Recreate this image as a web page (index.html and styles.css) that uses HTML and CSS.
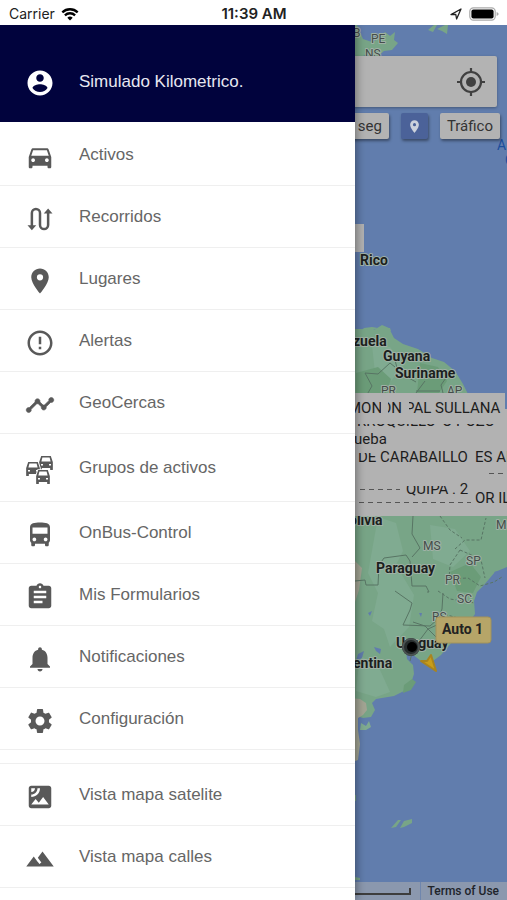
FILE: index.html
```html
<!DOCTYPE html>
<html lang="es">
<head>
  <meta charset="UTF-8">
  <meta name="viewport" content="width=device-width, initial-scale=1.0">
  <title>Mapa</title>
  <link rel="stylesheet" href="styles.css">
</head>
<body>

  <!-- Status bar -->
  <header class="status-bar">
    <div class="status-left">
      <span>Carrier</span>
      <svg class="wifi" viewBox="0 0 18 14">
        <path d="M9 13.6 6.3 10.7a4 4 0 0 1 5.4 0z"/>
        <path d="M3.9 8.3a7.4 7.4 0 0 1 10.2 0M1.3 5.3a11.2 11.2 0 0 1 15.4 0" fill="none" stroke="#000" stroke-width="2.3"/>
      </svg>
    </div>
    <span class="clock">11:39 AM</span>
    <div class="status-right">
      <svg class="arrow" viewBox="0 0 12 12"><path d="M1 6.6 11 1 6.6 11 5.8 6.5z" fill="none" stroke="#222" stroke-width="1.3" stroke-linejoin="round"/></svg>
      <svg class="battery" viewBox="0 0 30 14">
        <rect x=".8" y=".8" width="25.4" height="12.4" rx="3.6" fill="#fff" stroke="#aaa" stroke-width="1.2"/>
        <rect x="2.4" y="2.4" width="22.2" height="9.2" rx="2"/>
        <path d="M27.6 5v4c1.4-.6 2-1.2 2-2s-.6-1.4-2-2z" fill="#aaa"/>
      </svg>
    </div>
  </header>

  <main class="app">

    <!-- Map -->
    <section class="map">
      <svg class="map-canvas" viewBox="0 0 507 875" preserveAspectRatio="xMaxYMin slice">
        <!-- North: Canada and Greenland -->
        <g class="land">
          <path d="M340 0h17l6 14 9 3 8-4 5-6 5 4 5-4-1 8 4 3-6 7-8 1-7 6-12-2-10 6-15-4z"/>
          <path d="M428 5l6-5h3l-4 7zM437 4l8-4h3l-1 9-5-3z"/>
          <path d="M364 303l8-1 6 1-7 3-9-1zM385 303l5 0 1 3-6-1z"/>
        </g>

        <!-- South America -->
        <path class="land" d="M340 304l20 0 14 1 8-5 7 3 5 10 9 6 15 5 14 9 12 4 11 9 8 13 6 12 16 10 22 16v145l-12 5-11 13-7 7-3 9 1 13-10 14-12 13-12 14-8 6-12 0-9-7-6-4 1 9 6 6 1 9-3 9-5 7-12 6-18 3-4 4 3 7-4 7-8 1-9-3-2 6v17l-4 13-16 7z"/>
        <path class="land-light" d="M378 492l18 6 7 28-7 14 18 30-5 32-19 20-6-18-12-8 6-28-10-20zM360 630l20 15 10 22-14 5-20-6zM430 500l25 4 15 22-17 16-20-8zM372 320l18 2 14 18-13 16-16-8z"/>
        <path class="land-dark" d="M356 348l22-6 13 12-5 14h-30zM420 338l18 4 9 14-8 12h-22zM450 547l20-9 11 14-8 16-16-2zM404 660l8-6 4 3-5 8-8 3z"/>
        <path class="desert" d="M340 540l15-4 7 7-3 22-6 18-13 8zM340 672l20 2 6 4 1 7-4 5-5 3 0 12 2 14-2 16-14 5z"/>
        <path class="water" d="M358 629l6-3-2 7-6 3zM374 622l7 2-1 5-4-3zM368 588l4-2-2 5zM419 588l3 0-1 4zM494 547l4-1-1 4z"/>
        <path class="border" d="M355 556l10-1 1 5 12 0 1-20 5-7 22-3 4 6 2 25 14 0 3 6-2 0M395 566l17 12-2 7-7 15 27 1 8-7 4-10 1-16M439 599l-11 5-15 20-3 12M413 597l12 4 8 8 6 6M413 491l-1 18 8 14-8 9M365 373l7-12-7-13 13 1 12-11 5 4M395 335l3 12 18 10M425 356l-9 12M448 350l-7 10 2 8M416 366l24 0"/>
        <path class="border dashed" d="M440 491l10 14 12 8M455 524l10-9 16 0 5-22M460 525l-10 15-1 14M460 525l16 7 5 3 4 18M448 554l20-1 12 8 14-4 8-5M438 566l12 8 25 4M440 588l18 5 14 10"/>
        <path class="land" d="M391 803l7-8 3 0-5 7zM400 803l4-7 8-2 0 4-8 4zM355 770h1v6h-1zM355 852l5 1v2h-5z"/>
        <path class="land-light" d="M361 698l5 3 3-5 2 6-5 3-6 0z"/>

        <!-- Place labels -->
        <g class="region">
          <text x="353" y="12">B</text>
          <text x="371" y="18">PE</text>
          <text x="365" y="33">NS</text>
          <text x="381" y="370">PR</text>
          <text x="447" y="370">AP</text>
          <text x="423" y="525">MS</text>
          <text x="466" y="540">SP</text>
          <text x="445" y="559">PR</text>
          <text x="457" y="578">SC</text>
          <text x="432" y="596">RS</text>
          <text x="496" y="504">MG</text>
        </g>
        <g class="country">
          <text x="360" y="240">Rico</text>
          <text x="353" y="321">zuela</text>
          <text x="383" y="336">Guyana</text>
          <text x="395" y="353">Suriname</text>
          <text x="349" y="500">olivia</text>
          <text x="376" y="548">Paraguay</text>
          <text x="396" y="623">Uruguay</text>
          <text x="353" y="643">entina</text>
        </g>
        <g class="ocean">
          <text x="497" y="125">A</text>
          <text x="505" y="140">O</text>
        </g>

        <!-- Overlapping asset labels -->
        <g class="tags">
          <rect x="340" y="199" width="24" height="28"/>
          <rect x="340" y="368" width="165" height="30"/>
          <rect x="340" y="384" width="167" height="107"/>
          <text x="357" y="401">RROQUILLO</text>
          <text x="442" y="401">O POZO</text>
          <rect x="356" y="374" width="149" height="25"/>
          <text x="348" y="388">MON</text>
          <text x="381" y="388">ON</text>
          <rect x="381" y="374" width="7" height="18"/>
          <text x="405" y="388">PAL SULLANA</text>
          <rect x="403" y="374" width="6" height="18"/>
          <text x="354" y="419">ueba</text>
          <text x="358" y="437">DE CARABAILLO</text>
          <rect x="356" y="423" width="24" height="5"/>
          <text x="475" y="437">ES AL</text>
          <path class="scraps" d="M489 448.500h14M360 464.500h40M359 477.500h112"/>
          <text x="406" y="469">QUIPA</text>
          <rect x="404" y="456" width="44" height="5"/>
          <text x="452" y="469">. 2</text>
          <text x="475" y="478">OR ILO</text>
        </g>

        <!-- Vehicle -->
        <circle cx="411" cy="622" r="9" fill="#262c2c"/>
        <circle cx="411" cy="622" r="8" fill="none" stroke="#4b5352" stroke-width="2"/>
        <circle cx="412" cy="622" r="5" fill="#000"/>
        <path d="M421 636l6 0 4-6 5 16z" fill="#c89d1b" stroke="#a88420" stroke-width="2" stroke-linejoin="round"/>
        <rect class="callout" x="436" y="592" width="55" height="26" rx="3"/>
        <text class="callout-text" x="442" y="609">Auto 1</text>
      </svg>

      <div class="controls">
        <div class="search">
          <input class="search-input" type="search" aria-label="Buscar">
          <button class="locate" aria-label="Mi ubicación">
            <svg viewBox="0 0 28 28">
              <circle cx="14" cy="14" r="10" fill="none" stroke="#404040" stroke-width="2.2"/>
              <circle cx="14" cy="14" r="5" fill="#404040"/>
              <path d="M14 0v5M14 23v5M0 14h5M23 14h5" stroke="#404040" stroke-width="2.2"/>
            </svg>
          </button>
        </div>
        <div class="chips">
          <button class="chip">seg</button>
          <button class="chip chip-pin" aria-label="Lugares">
            <svg viewBox="0 0 24 24"><path d="M12 2C8.130 2 5 5.130 5 9c0 5.250 7 13 7 13s7-7.750 7-13c0-3.870-3.130-7-7-7zm0 9.500a2.500 2.500 0 1 1 0-5 2.500 2.500 0 0 1 0 5z"/></svg>
          </button>
          <button class="chip">Tráfico</button>
        </div>
      </div>

      <footer class="map-footer">
        <span class="scale"></span>
        <a class="terms" href="#">Terms of Use</a>
      </footer>
    </section>

    <!-- Side menu -->
    <nav class="drawer">
      <div class="profile">
        <svg class="icon" viewBox="0 0 24 24"><path d="M12 2C6.480 2 2 6.480 2 12s4.480 10 10 10 10-4.480 10-10S17.520 2 12 2zm0 3c1.660 0 3 1.340 3 3s-1.340 3-3 3-3-1.340-3-3 1.340-3 3-3zm0 14.200c-2.500 0-4.710-1.280-6-3.220.03-1.990 4-3.080 6-3.080 1.990 0 5.970 1.090 6 3.080-1.290 1.940-3.500 3.220-6 3.220z"/></svg>
        <span>Simulado Kilometrico.</span>
      </div>

      <ul class="menu">
        <li><a class="item" href="#">
          <svg class="icon" viewBox="0 0 24 24"><path d="M18.920 6.010C18.720 5.420 18.160 5 17.500 5h-11c-.66 0-1.210.42-1.420 1.010L3 12v8c0 .55.45 1 1 1h1c.55 0 1-.45 1-1v-1h12v1c0 .55.45 1 1 1h1c.55 0 1-.45 1-1v-8l-2.080-5.990zM6.500 16c-.83 0-1.500-.67-1.500-1.500S5.670 13 6.500 13s1.500.67 1.500 1.500S7.330 16 6.500 16zm11 0c-.83 0-1.500-.67-1.500-1.500s.67-1.500 1.500-1.500 1.500.67 1.500 1.500-.67 1.500-1.500 1.500zM5 11l1.500-4.500h11L19 11H5z"/></svg>
          <span>Activos</span>
        </a></li>
        <li><a class="item" href="#">
          <svg class="icon" viewBox="0 0 24 24"><path d="M5.500 18V7.200a3.200 3.200 0 0 1 6.500 0v9.600a3.200 3.200 0 0 0 6.500 0V6" fill="none" stroke="#595959" stroke-width="2"/><path d="M2 17h7l-3.500 4zM15 7.500h7L18.500 3.500z"/></svg>
          <span>Recorridos</span>
        </a></li>
        <li><a class="item" href="#">
          <svg class="icon" viewBox="0 0 24 24"><path d="M12 2C8.130 2 5 5.130 5 9c0 5.250 7 13 7 13s7-7.750 7-13c0-3.870-3.130-7-7-7zm0 9.500a2.500 2.500 0 1 1 0-5 2.500 2.500 0 0 1 0 5z"/></svg>
          <span>Lugares</span>
        </a></li>
        <li><a class="item" href="#">
          <svg class="icon" viewBox="0 0 24 24"><path d="M11 15h2v2h-2zm0-8h2v6h-2zm.99-5C6.470 2 2 6.480 2 12s4.470 10 9.990 10C17.520 22 22 17.520 22 12S17.520 2 11.990 2zM12 20c-4.420 0-8-3.580-8-8s3.580-8 8-8 8 3.580 8 8-3.580 8-8 8z"/></svg>
          <span>Alertas</span>
        </a></li>
        <li><a class="item" href="#">
          <svg class="icon" viewBox="0 0 24 24"><path d="M23 8c0 1.100-.9 2-2 2-.18 0-.35-.02-.51-.07l-3.560 3.550c.05.16.07.34.07.520 0 1.100-.9 2-2 2s-2-.9-2-2c0-.18.02-.36.07-.52l-2.550-2.550c-.16.05-.34.07-.52.07s-.36-.02-.52-.07l-4.550 4.560c.05.16.07.33.07.510 0 1.100-.9 2-2 2s-2-.9-2-2 .9-2 2-2c.18 0 .35.02.51.07l4.560-4.550C8.020 9.360 8 9.180 8 9c0-1.100.9-2 2-2s2 .9 2 2c0 .18-.02.36-.07.520l2.550 2.550c.16-.05.34-.07.52-.07s.36.02.52.07l3.550-3.560C19.020 8.350 19 8.180 19 8c0-1.100.9-2 2-2s2 .9 2 2z" stroke="#595959" stroke-width=".5"/></svg>
          <span>GeoCercas</span>
        </a></li>
        <li><a class="item item-tall" href="#">
          <svg class="icon" viewBox="0 0 30 30">
            <defs>
              <g id="car">
                <path d="M3 1h10l2 6v8h-3v-2H4v2H1V7z" stroke="#fff" stroke-width="1.500"/>
                <path d="M3.200 1h9.600l2 6v8h-2.600v-2H3.800v2H1.200V7z"/>
                <path d="M4.400 2.600h7.200L12.600 6.500H3.400zM3 9h2v1.600H3zM11 9h2v1.600h-2z" fill="#fff"/>
              </g>
            </defs>
            <use href="#car" x="13" y="0"/>
            <use href="#car" x="0" y="6"/>
            <use href="#car" x="10" y="14"/>
          </svg>
          <span>Grupos de activos</span>
        </a></li>
        <li><a class="item" href="#">
          <svg class="icon" viewBox="0 0 24 24"><path d="M4 16c0 .88.39 1.670 1 2.220V20c0 .55.45 1 1 1h1c.55 0 1-.45 1-1v-1h8v1c0 .55.45 1 1 1h1c.55 0 1-.45 1-1v-1.780c.61-.55 1-1.340 1-2.220V6c0-3.500-3.580-4-8-4s-8 .5-8 4v10zm3.500 1c-.83 0-1.500-.67-1.500-1.500S6.670 14 7.500 14s1.500.67 1.500 1.500S8.330 17 7.500 17zm9 0c-.83 0-1.500-.67-1.500-1.500s.67-1.500 1.500-1.500 1.500.67 1.500 1.500-.67 1.500-1.500 1.500zm1.500-6H6V6h12v5z"/></svg>
          <span>OnBus-Control</span>
        </a></li>
        <li><a class="item" href="#">
          <svg class="icon" viewBox="0 0 24 24"><path d="M19 3h-4.180C14.400 1.840 13.300 1 12 1c-1.300 0-2.400.84-2.820 2H5c-1.100 0-2 .9-2 2v14c0 1.100.9 2 2 2h14c1.100 0 2-.9 2-2V5c0-1.100-.9-2-2-2zm-7 0c.55 0 1 .45 1 1s-.45 1-1 1-1-.45-1-1 .45-1 1-1zm2 14H7v-2h7v2zm3-4H7v-2h10v2zm0-4H7V7h10v2z"/></svg>
          <span>Mis Formularios</span>
        </a></li>
        <li><a class="item" href="#">
          <svg class="icon" viewBox="0 0 24 24"><path d="M12 22c1.100 0 2-.9 2-2h-4c0 1.100.89 2 2 2zm6-6v-5c0-3.070-1.640-5.640-4.500-6.320V4c0-.83-.67-1.500-1.500-1.500s-1.500.67-1.500 1.500v.68C7.630 5.360 6 7.920 6 11v5l-2 2v1h16v-1l-2-2z"/></svg>
          <span>Notificaciones</span>
        </a></li>
        <li><a class="item" href="#">
          <svg class="icon" viewBox="0 0 24 24"><path d="M19.140 12.940c.04-.3.06-.61.06-.94 0-.32-.02-.64-.07-.94l2.030-1.580c.18-.14.23-.41.12-.61l-1.920-3.320c-.12-.22-.37-.29-.59-.22l-2.390.96c-.5-.38-1.030-.7-1.620-.94l-.36-2.540c-.04-.24-.24-.41-.48-.41h-3.840c-.24 0-.43.17-.47.410l-.36 2.540c-.59.24-1.130.57-1.620.940l-2.390-.96c-.22-.08-.47 0-.59.220L2.740 8.870c-.12.21-.08.47.12.610l2.030 1.580c-.05.3-.09.63-.09.940s.02.64.07.940l-2.030 1.580c-.18.14-.23.41-.12.610l1.920 3.320c.12.22.37.29.59.220l2.390-.96c.5.38 1.030.7 1.620.940l.36 2.540c.05.24.24.41.48.410h3.840c.24 0 .44-.17.47-.41l.36-2.540c.59-.24 1.130-.56 1.620-.94l2.390.96c.22.08.47 0 .59-.22l1.920-3.320c.12-.22.07-.47-.12-.61l-2.010-1.580zM12 15.600c-1.980 0-3.600-1.620-3.600-3.600s1.620-3.600 3.600-3.600 3.600 1.620 3.600 3.600-1.620 3.600-3.600 3.600z"/></svg>
          <span>Configuración</span>
        </a></li>
      </ul>

      <ul class="menu menu-views">
        <li><a class="item" href="#">
          <svg class="icon" viewBox="0 0 24 24"><path d="M19 3H5c-1.100 0-2 .9-2 2v14c0 1.100.9 2 2 2h14c1.100 0 2-.9 2-2V5c0-1.100-.9-2-2-2zM5 4.990h3C8 6.650 6.660 8 5 8V4.990zM5 12v-2c2.760 0 5-2.250 5-5.010h2C12 8.860 8.870 12 5 12zm0 6l3.500-4.500 2.500 3.010L14.500 12l4.500 6H5z"/></svg>
          <span>Vista mapa satelite</span>
        </a></li>
        <li><a class="item" href="#">
          <svg class="icon" viewBox="0 0 24 24"><path d="M14 6l-3.750 5 2.850 3.800-1.600 1.200C9.810 13.750 7 10 7 10l-6 8h22L14 6z"/></svg>
          <span>Vista mapa calles</span>
        </a></li>
      </ul>
    </nav>

  </main>

</body>
</html>
```
FILE: styles.css
```css
* {
  box-sizing: border-box;
}

body {
  margin: 0;
  min-height: 100vh;
  display: flex;
  flex-direction: column;
  background: #fff;
  font-family: "Liberation Sans", Arial, sans-serif;
}

button {
  border: none;
  padding: 0;
  font: inherit;
  cursor: pointer;
}

/* Status bar */
.status-bar {
  display: grid;
  grid-template-columns: 1fr auto 1fr;
  align-items: center;
  height: 25px;
  padding: 2px 8px 0 9px;
  font-family: Inter, sans-serif;
  font-size: 14px;
  color: #222;
}

.status-left,
.status-right {
  display: flex;
  align-items: center;
  gap: 6px;
}

.status-right {
  justify-content: flex-end;
  gap: 7px;
}

.clock {
  font-size: 15px;
  font-weight: 600;
}

.wifi {
  width: 18px;
  height: 14px;
}

.arrow {
  width: 12px;
  height: 12px;
}

.battery {
  width: 30px;
  height: 14px;
}

.app {
  position: relative;
  flex: 1;
  display: flex;
  overflow: hidden;
}

/* Map */
.map {
  position: absolute;
  inset: 0;
  background: #617dad;
  font-family: Roboto, sans-serif;
}

.map-canvas {
  display: block;
  width: 100%;
  height: 100%;
}

.land {
  fill: #78a587;
}

.land-light {
  fill: #80ab91;
}

.land-dark {
  fill: #6b9c78;
}

.desert {
  fill: #a3a594;
}

.water {
  fill: #617dad;
}

.border {
  fill: none;
  stroke: #587564;
  stroke-width: 1;
}

.dashed {
  stroke-dasharray: 3 2;
}

.region,
.country {
  paint-order: stroke;
  stroke: #a0b2a6;
  stroke-width: 2px;
  stroke-linejoin: round;
}

.region {
  font-size: 12px;
  fill: #454d4a;
}

.country {
  font-size: 14px;
  font-weight: 700;
  fill: #1c1f1e;
}

.ocean {
  font-size: 14px;
  fill: #1c4d9c;
}

.tags rect {
  fill: #b2b2b2;
}

.tags text {
  font-size: 15px;
  fill: #1d1d1d;
}

.scraps {
  stroke: #555;
  stroke-width: 1;
  stroke-dasharray: 5 4;
}

.callout {
  fill: #b6a568;
  stroke: #a2925a;
}

.callout-text {
  font-size: 14px;
  font-weight: 700;
  fill: #222;
}

.controls {
  position: absolute;
  top: 31px;
  left: 10px;
  right: 7px;
}

.search {
  display: flex;
  align-items: center;
  height: 51px;
  margin-right: 3px;
  padding-right: 12px;
  background: #b3b3b3;
  border-radius: 2px;
  box-shadow: 0 1px 3px rgba(0, 0, 0, 0.3);
}

.search-input {
  flex: 1;
  border: none;
  background: none;
}

.locate {
  width: 28px;
  height: 28px;
  background: none;
}

.chips {
  display: flex;
  justify-content: flex-end;
  gap: 12px;
  margin-top: 6px;
}

.chip {
  height: 26px;
  padding: 0 7px;
  background: #b3b3b3;
  color: #333;
  font-size: 15px;
  border-radius: 2px;
  box-shadow: 1px 2px 3px rgba(0, 0, 0, 0.4);
}

.chip-pin {
  width: 27px;
  padding: 0 6px;
  background: #4b6299;
}

.chip-pin svg {
  display: block;
  width: 15px;
  fill: #ccd2dc;
}

.map-footer {
  position: absolute;
  right: 0;
  bottom: 0;
  left: 0;
  display: flex;
  justify-content: flex-end;
  align-items: center;
  height: 18px;
  background: #8b98ae;
}

.scale {
  width: 100px;
  height: 7px;
  margin-right: 9px;
  border: solid #3d3d3d;
  border-width: 0 2px 2px 0;
}

.terms {
  padding: 0 8px 0 6px;
  border-left: 1px solid #6f86ad;
  font-size: 12px;
  font-weight: 500;
  line-height: 18px;
  color: #20242b;
  text-decoration: none;
}

/* Side menu */
.drawer {
  position: relative;
  width: 70%;
  background: #fff;
  box-shadow: 0 0 10px rgba(0, 0, 0, 0.5);
  font-size: 17px;
}

.profile {
  display: flex;
  align-items: center;
  gap: 24px;
  height: 97px;
  padding: 16px 25px 0;
  background: #01033d;
  color: #e8e8f2;
}

.icon {
  flex: none;
  width: 30px;
  height: 30px;
  fill: #595959;
}

.profile .icon {
  margin-top: 2px;
  fill: #fff;
}

.menu {
  margin: 0;
  padding: 2px 0 0;
  list-style: none;
}

.menu-views {
  margin-top: 13px;
  border-top: 1px solid #efefef;
  padding: 0;
}

.item {
  display: flex;
  align-items: center;
  gap: 24px;
  height: 62px;
  padding: 0 25px;
  border-bottom: 1px solid #efefef;
  color: #666;
  text-decoration: none;
}

.item .icon {
  margin-top: 4px;
}

.item-tall {
  height: 68px;
}
```
